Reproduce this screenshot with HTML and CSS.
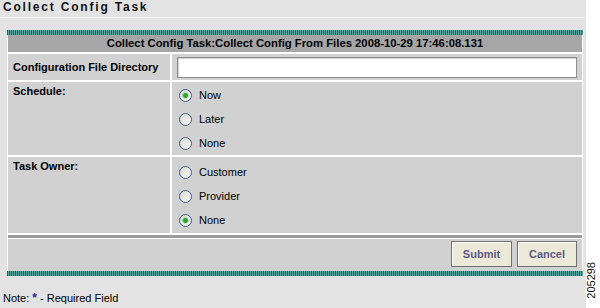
FILE: index.html
```html
<!DOCTYPE html>
<html lang="en">
<head>
    <meta charset="UTF-8">
    <title>Collect Config Task</title>
    <link rel="stylesheet" href="styles.css">
</head>
<body>
    <div class="frame">
        <div class="page">
            <h1 class="title">Collect Config Task</h1>

            <div class="panel">
                <div class="bar"></div>
                <form class="form-grid">
                    <div class="header">Collect Config Task:Collect Config From Files 2008-10-29 17:46:08.131</div>

                    <div class="label label-mid">Configuration File Directory</div>
                    <div class="field field-mid">
                        <input type="text" class="text-input">
                    </div>

                    <div class="label">Schedule:</div>
                    <div class="field field-schedule">
                        <label class="radio"><input type="radio" name="schedule" checked> Now</label>
                        <label class="radio"><input type="radio" name="schedule"> Later</label>
                        <label class="radio"><input type="radio" name="schedule"> None</label>
                    </div>

                    <div class="label">Task Owner:</div>
                    <div class="field field-owner">
                        <label class="radio"><input type="radio" name="owner"> Customer</label>
                        <label class="radio"><input type="radio" name="owner"> Provider</label>
                        <label class="radio"><input type="radio" name="owner" checked> None</label>
                    </div>

                    <div class="actions">
                        <button type="button" class="btn btn-submit">Submit</button>
                        <button type="button" class="btn">Cancel</button>
                    </div>
                </form>
                <div class="bar"></div>
            </div>

            <p class="note">Note: <span class="req">*</span> - Required Field</p>
        </div>
        <div class="side">
            <span class="fig-id">205298</span>
        </div>
    </div>
</body>
</html>
```

FILE: styles.css
```css
* {
    margin: 0;
    padding: 0;
    box-sizing: border-box;
}

body {
    font-family: "Liberation Sans", Arial, sans-serif;
    font-size: 11px;
    color: #000;
    background: #fff;
}

.frame {
    display: flex;
    height: 308px;
}

.page {
    width: 586px;
    background: #e3e3e3;
}

.side {
    flex: 1;
    background: #fff;
    position: relative;
}

.fig-id {
    position: absolute;
    top: 262px;
    left: 0;
    writing-mode: vertical-rl;
    transform: rotate(180deg);
    font-size: 11px;
    line-height: 11px;
    color: #111;
}

.title {
    height: 18px;
    padding-left: 3px;
    font-size: 12px;
    font-weight: bold;
    letter-spacing: 1.8px;
    line-height: 14px;
    color: #111;
    border-bottom: 1px solid #f2f2f2;
}

.panel {
    margin: 12px 3px 0 7px;
}

.bar {
    height: 5px;
    background: repeating-linear-gradient(90deg, #1d6a65 0 1px, #55a59f 1px 2px);
}

.form-grid {
    display: grid;
    grid-template-columns: 162px 1fr;
    gap: 2px;
    background: #fff;
    border-left: 1px solid #fff;
    border-right: 1px solid #fff;
}

.header {
    grid-column: 1 / -1;
    height: 17px;
    line-height: 17px;
    background: #a6a6a6;
    text-align: center;
    font-size: 11.3px;
    font-weight: bold;
}

.label {
    background: #d1d1d1;
    font-weight: bold;
    padding: 3px 5px 0;
    line-height: 13px;
}

.label-mid {
    height: 26px;
    display: flex;
    align-items: center;
    padding-top: 0;
}

.field {
    background: #d1d1d1;
}

.field-mid {
    display: flex;
    align-items: center;
    padding-left: 5px;
}

.field-schedule {
    height: 73px;
    padding-top: 1px;
}

.field-owner {
    height: 76px;
    padding-top: 3px;
}

.text-input {
    width: 400px;
    height: 21px;
    border: 1px solid #8e8e8e;
    background: #fff;
    box-shadow: inset 1px 1px 0 #cfcfcf;
}

.radio {
    display: flex;
    align-items: center;
    gap: 7px;
    height: 24px;
    padding-left: 7px;
}

.radio input {
    appearance: none;
    -webkit-appearance: none;
    width: 13px;
    height: 13px;
    border-radius: 50%;
    border: 1px solid #3f5f86;
    background: linear-gradient(135deg, #d6d6d0, #fbfbfb);
    margin: 0;
}

.radio input:checked {
    background: radial-gradient(circle, #2aa42a 0 2px, #7cc77c 2.5px, transparent 3.5px),
                linear-gradient(135deg, #d6d6d0, #fbfbfb);
}

.actions {
    grid-column: 1 / -1;
    display: flex;
    justify-content: flex-end;
    gap: 5px;
    height: 36px;
    padding: 3px 5px 0 0;
    background: #d1d1d1;
    border-top: 3px solid #9b9b9b;
    box-shadow: inset 0 1px 0 #fff;
}

.btn {
    width: 60px;
    height: 26px;
    background: #ece9d8;
    border: 1px solid #707070;
    box-shadow: inset 1px 1px 0 #fff;
    font-family: "Liberation Sans", Arial, sans-serif;
    font-size: 11px;
    font-weight: bold;
    color: #5a5a85;
    cursor: pointer;
}

.btn-submit {
    width: 61px;
}

.note {
    margin-top: 16px;
    padding-left: 3px;
    line-height: 13px;
}

.req {
    color: #1a2aa0;
    font-size: 12px;
    font-weight: bold;
}
```
